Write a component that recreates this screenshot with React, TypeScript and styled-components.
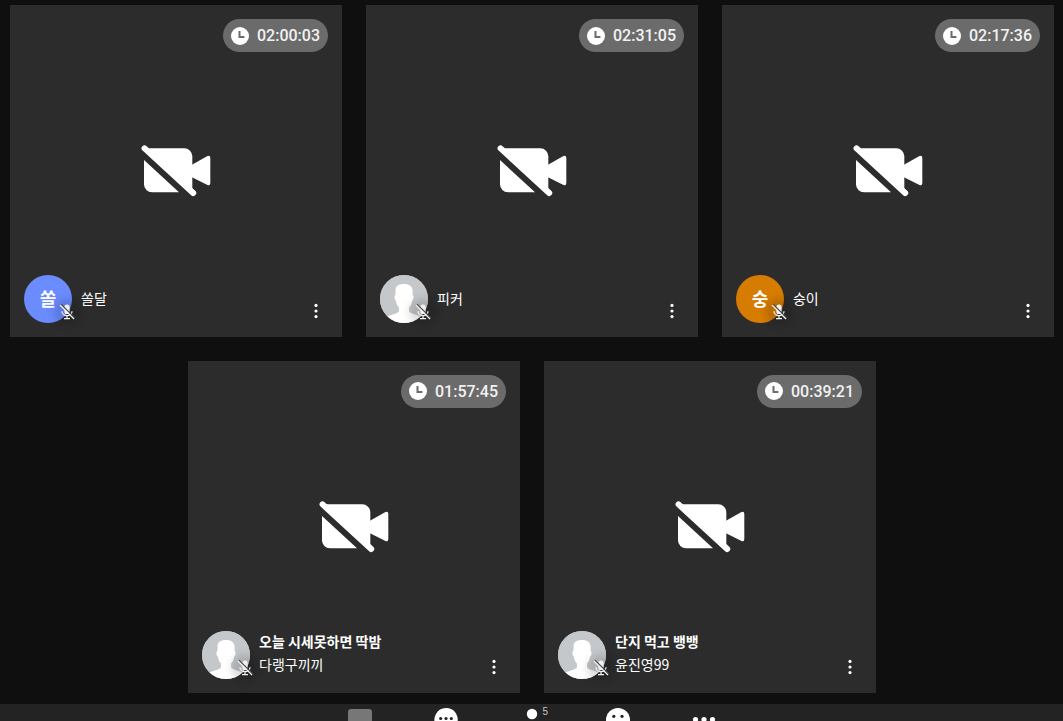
import React from "react";
import styled, { createGlobalStyle } from "styled-components";

const GlobalStyle = createGlobalStyle`
  *, *::before, *::after { box-sizing: border-box; }
  body {
    margin: 0;
    background: #0f0f0f;
    color: #fff;
    font-family: Roboto, "Noto Sans CJK KR", sans-serif;
  }
`;

const Room = styled.div`
  height: 100vh;
  overflow: hidden;
`;

const Gallery = styled.main`
  display: flex;
  flex-wrap: wrap;
  justify-content: center;
  gap: 24px;
  padding: 5px 9px 11px 10px;
`;

const Tile = styled.article`
  display: grid;
  grid-template-rows: 1fr auto 1fr;
  width: calc((100% - 48px) / 3);
  aspect-ratio: 1;
  padding: 14px;
  background: #2c2c2c;
`;

const Timer = styled.div`
  display: flex;
  align-items: center;
  align-self: start;
  justify-self: end;
  gap: 8px;
  height: 33px;
  padding: 0 8px;
  border-radius: 17px;
  background: #6b6b6b;
  color: #f2f2f2;
  font-size: 16px;
  font-weight: 500;
  line-height: 33px;
`;

const CameraOff = styled.div`
  display: flex;
  justify-content: center;
`;

const Footer = styled.footer`
  display: flex;
  align-items: flex-end;
  justify-content: space-between;
`;

const Member = styled.div`
  display: flex;
  align-items: center;
  gap: 9px;
`;

const Avatar = styled.div<{ $color: string }>`
  position: relative;
  display: flex;
  align-items: center;
  justify-content: center;
  width: 48px;
  height: 48px;
  border-radius: 50%;
  background: ${(p) => p.$color};
`;

const Initial = styled.span`
  padding-bottom: 2px;
  font-family: "Noto Sans CJK KR", sans-serif;
  font-size: 18px;
  font-weight: 700;
  line-height: 24px;
`;

const Portrait = styled.svg`
  display: block;
  border-radius: 50%;
`;

const MutedBadge = styled.span`
  position: absolute;
  right: -4px;
  bottom: 2px;
  display: flex;
  border-radius: 50%;
  background: rgba(0, 0, 0, 0.12);
  box-shadow: 0 0 8px 4px rgba(0, 0, 0, 0.16);
`;

const Names = styled.div<{ $stacked: boolean }>`
  display: flex;
  flex-direction: column;
  gap: 3px;
  padding-bottom: ${(p) => (p.$stacked ? 5 : 2)}px;
  font-family: "Noto Sans CJK KR", sans-serif;
  font-size: 14px;
  line-height: 20px;
  white-space: nowrap;
`;

const Goal = styled.strong`
  font-weight: 700;
`;

const IconButton = styled.button`
  display: flex;
  align-items: center;
  justify-content: center;
  width: 24px;
  height: 24px;
  padding: 0;
  border: 0;
  background: none;
  color: #fff;
`;

const Toolbar = styled.nav`
  display: flex;
  justify-content: center;
  height: 64px;
  background: #232323;
`;

const Tool = styled.button`
  display: flex;
  align-items: flex-start;
  justify-content: center;
  width: 86px;
  padding: 3px 0 0;
  border: 0;
  background: none;
  color: #fff;
`;

const People = styled.span`
  position: relative;
  display: flex;
`;

const Count = styled.span`
  position: absolute;
  left: 24px;
  top: 0;
  color: #c4c4c4;
  font-size: 10px;
  line-height: 10px;
`;

const ClockIcon = () => (
  <svg width="18" height="18" viewBox="0 0 18 18" aria-hidden="true">
    <circle cx="9" cy="9" r="9" fill="#fff" />
    <path d="M8.5 4V10H13.4" fill="none" stroke="#6b6b6b" strokeWidth="2" />
  </svg>
);

const CameraOffIcon = () => (
  <svg width="70" height="52" viewBox="0 0 70 52" fill="#fff" role="img" aria-label="카메라 꺼짐">
    <path d="M4 3.3H43.3a8 8 0 0 1 8 8V47Z" />
    <path d="M3 15 38 47.3H11a8 8 0 0 1-8-8Z" />
    <path d="M51 19.8 66 11.2Q69.3 9.8 69.3 13V38Q69.3 41.4 66 39.8L51 32.2Z" />
    <path d="M3.6 3.4 52.2 48" fill="none" stroke="#fff" strokeWidth="6" strokeLinecap="round" />
  </svg>
);

const PersonPortrait = () => (
  <Portrait width="48" height="48" viewBox="0 0 48 48" aria-hidden="true">
    <rect width="48" height="48" fill="#c5c8cb" />
    <path
      fill="#fff"
      d="M15.6 14.5C16 10.5 19.5 9 24 9C29.5 9 32.2 11.5 32.6 15.5V20C34 20 33.8 24.5 32.2 25.4C31.6 28.5 30.5 31 29 32.6V36.2C30.5 39.2 38 39.6 41 42V48H7V42C10 39.6 17.6 39.2 19 36.2V32.6C17.4 31 16.4 28.5 15.8 25.4C14.2 24.5 14 20 15.4 20Z"
    />
  </Portrait>
);

const MicOffIcon = () => (
  <svg width="18" height="18" viewBox="0 0 18 18" role="img" aria-label="음소거">
    <rect x="6.4" y="1.5" width="5.2" height="9.6" rx="2.6" fill="#f1f1f1" />
    <path
      d="M4 8.2C4 14.2 14 14.2 14 8.2M9 12.6V15.4M6 15.6H12"
      fill="none"
      stroke="#f1f1f1"
      strokeWidth="1.3"
    />
    <path d="M2.8 1.2 17 15" stroke="#444" strokeWidth="1.3" />
    <path d="M2 2 16 16" stroke="#f4f4f4" strokeWidth="1.3" />
  </svg>
);

const MoreIcon = () => (
  <svg width="24" height="24" viewBox="0 0 24 24" fill="#fff" aria-hidden="true">
    <circle cx="12" cy="6.4" r="1.6" />
    <circle cx="12" cy="12" r="1.6" />
    <circle cx="12" cy="17.6" r="1.6" />
  </svg>
);

const ShareIcon = () => (
  <svg width="26" height="26" viewBox="0 0 26 26" aria-hidden="true">
    <rect x="1" y="2" width="24" height="20" rx="3" fill="#777" />
  </svg>
);

const ChatIcon = () => (
  <svg width="26" height="26" viewBox="0 0 26 26" aria-hidden="true">
    <path d="M13 1a11.6 11.6 0 1 1-5 22L2 24l1.4-5A11.6 11.6 0 0 1 13 1Z" fill="#fff" />
    <g fill="#232323">
      <circle cx="7.7" cy="11.5" r="1.6" />
      <circle cx="13" cy="11.5" r="1.6" />
      <circle cx="18.3" cy="11.5" r="1.6" />
    </g>
  </svg>
);

const PeopleIcon = () => (
  <svg width="26" height="26" viewBox="0 0 26 26" fill="#fff" aria-hidden="true">
    <circle cx="13" cy="7" r="5.2" />
    <path d="M3 25c0-7 4-10 10-10s10 3 10 10Z" />
  </svg>
);

const SmileIcon = () => (
  <svg width="26" height="26" viewBox="0 0 26 26" aria-hidden="true">
    <circle cx="13" cy="13" r="12" fill="#fff" />
    <circle cx="8.8" cy="9.3" r="1.6" fill="#232323" />
    <circle cx="17" cy="9.3" r="1.6" fill="#232323" />
    <path d="M7 15c2 5 10 5 12 0" fill="none" stroke="#232323" strokeWidth="2" />
  </svg>
);

const EtcIcon = () => (
  <svg width="26" height="26" viewBox="0 0 26 26" fill="#fff" aria-hidden="true">
    <circle cx="4.5" cy="12.5" r="2.6" />
    <circle cx="13" cy="12.5" r="2.6" />
    <circle cx="21.5" cy="12.5" r="2.6" />
  </svg>
);

type Participant = {
  name: string;
  time: string;
  goal?: string;
  initial?: string;
  color?: string;
};

const participants: Participant[] = [
  { name: "쏠달", time: "02:00:03", initial: "쏠", color: "#6a8cff" },
  { name: "피커", time: "02:31:05" },
  { name: "숭이", time: "02:17:36", initial: "숭", color: "#d67c00" },
  { name: "다랭구끼끼", time: "01:57:45", goal: "오늘 시세못하면 딱밤" },
  { name: "윤진영99", time: "00:39:21", goal: "단지 먹고 뱅뱅" },
];

const ParticipantTile = ({ name, time, goal, initial, color = "#c5c8cb" }: Participant) => (
  <Tile>
    <Timer>
      <ClockIcon />
      <time>{time}</time>
    </Timer>
    <CameraOff>
      <CameraOffIcon />
    </CameraOff>
    <Footer>
      <Member>
        <Avatar $color={color}>
          {initial ? <Initial>{initial}</Initial> : <PersonPortrait />}
          <MutedBadge>
            <MicOffIcon />
          </MutedBadge>
        </Avatar>
        <Names $stacked={Boolean(goal)}>
          {goal && <Goal>{goal}</Goal>}
          <span>{name}</span>
        </Names>
      </Member>
      <IconButton type="button" aria-label="더보기">
        <MoreIcon />
      </IconButton>
    </Footer>
  </Tile>
);

export default function App() {
  return (
    <Room>
      <GlobalStyle />
      <Gallery>
        {participants.map((p) => (
          <ParticipantTile key={p.name} {...p} />
        ))}
      </Gallery>
      <Toolbar>
        <Tool type="button" aria-label="화면 공유">
          <ShareIcon />
        </Tool>
        <Tool type="button" aria-label="채팅">
          <ChatIcon />
        </Tool>
        <Tool type="button" aria-label="참여자">
          <People>
            <PeopleIcon />
            <Count>5</Count>
          </People>
        </Tool>
        <Tool type="button" aria-label="반응">
          <SmileIcon />
        </Tool>
        <Tool type="button" aria-label="기타">
          <EtcIcon />
        </Tool>
      </Toolbar>
    </Room>
  );
}
